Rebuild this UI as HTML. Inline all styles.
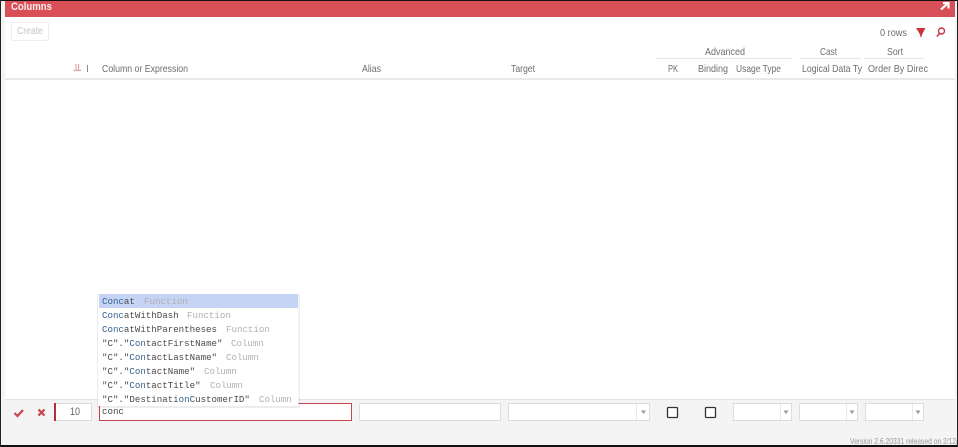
<!DOCTYPE html>
<html>
<head>
<meta charset="utf-8">
<style>
html,body{margin:0;padding:0;background:#f3f3f3;overflow:hidden;width:958px;height:447px}
svg{display:block}
text{font-family:"Liberation Sans",sans-serif}
.h{font-size:10.500px;fill:#6e6e6e}
.m text{font-family:"Liberation Mono",monospace;font-size:9.150px}
.b{fill:#37618f}
.d{fill:#4a4a4a}
.g{fill:#b0b0b0}
</style>
</head>
<body>
<svg width="958" height="447" viewBox="0 0 958 447" xmlns="http://www.w3.org/2000/svg">
<rect width="958" height="447" fill="#f4f4f4"/>
<rect x="5" y="17" width="950" height="383" fill="#fff"/>
<rect x="5" y="1" width="950" height="16" fill="#d84f57"/>
<text x="11" y="10" font-size="11" font-weight="bold" fill="#fbeeee" textLength="41" lengthAdjust="spacingAndGlyphs">Columns</text>
<path d="M941 9.500 L947 4 M943 3 H948.500 V8.500" stroke="#fff" stroke-width="2.200" fill="none"/>

<rect x="11.500" y="22.500" width="37" height="18" rx="1" fill="#fff" stroke="#eee"/>
<text x="17" y="34" font-size="10.500" fill="#c4c4c4" textLength="26" lengthAdjust="spacingAndGlyphs">Create</text>

<text x="880" y="36" class="h" textLength="27" lengthAdjust="spacingAndGlyphs">0 rows</text>
<path d="M916 28 H925.500 L922.500 33.500 L921 38 L919.500 33.500 Z" fill="#c9343c"/>
<circle cx="941.500" cy="31" r="3" fill="none" stroke="#c9343c" stroke-width="1.400"/>
<path d="M939.500 33.500 L936.800 36.500" stroke="#c9343c" stroke-width="1.500"/>

<text x="705" y="55" class="h" textLength="40" lengthAdjust="spacingAndGlyphs">Advanced</text>
<text x="820" y="55" class="h" textLength="17" lengthAdjust="spacingAndGlyphs">Cast</text>
<text x="887" y="55" class="h" textLength="16" lengthAdjust="spacingAndGlyphs">Sort</text>
<path d="M656 58.500 H792 M800 58.500 H861 M864 58.500 H924" stroke="#e6e6e6"/>

<path d="M73.500 70.500 H81 M76 64 V70 M78.500 64 V70" stroke="#e6a3a6" stroke-width="1.200"/>
<rect x="87" y="65" width="1" height="7" fill="#888"/>
<text x="102" y="72" class="h" textLength="86" lengthAdjust="spacingAndGlyphs">Column or Expression</text>
<text x="362" y="72" class="h" textLength="19" lengthAdjust="spacingAndGlyphs">Alias</text>
<text x="511" y="72" class="h" textLength="24" lengthAdjust="spacingAndGlyphs">Target</text>
<text x="668" y="72" class="h" textLength="10" lengthAdjust="spacingAndGlyphs">PK</text>
<text x="698" y="72" class="h" textLength="30" lengthAdjust="spacingAndGlyphs">Binding</text>
<text x="736" y="72" class="h" textLength="45" lengthAdjust="spacingAndGlyphs">Usage Type</text>
<text x="802" y="72" class="h" textLength="60" lengthAdjust="spacingAndGlyphs">Logical Data Ty</text>
<text x="868" y="72" class="h" textLength="60" lengthAdjust="spacingAndGlyphs">Order By Direc</text>
<rect x="5" y="78" width="950" height="2" fill="#e9e9e9"/>

<!-- Edit row -->
<rect x="5" y="399" width="950" height="1" fill="#e3e3e3"/>
<path d="M14.500 413 L17.500 416 L23 410" stroke="#c9444c" stroke-width="2.200" fill="none"/>
<path d="M38.500 409.500 L44.500 415.500 M44.500 409.500 L38.500 415.500" stroke="#c9444c" stroke-width="2.200" fill="none"/>
<rect x="54.500" y="403.500" width="37" height="17" fill="#fff" stroke="#ddd"/>
<rect x="54" y="403" width="2" height="18" fill="#b2323a"/>
<text x="70" y="415" font-size="11" fill="#666" textLength="10" lengthAdjust="spacingAndGlyphs">10</text>
<rect x="99.500" y="403.500" width="252" height="17" fill="#fff" stroke="#c4454d"/>
<g class="m"><text x="102" y="414" fill="#444">conc</text></g>

<rect x="359.500" y="403.500" width="141" height="17" fill="#fff" stroke="#ddd"/>
<g fill="#fff" stroke="#ddd">
<rect x="508.500" y="403.500" width="141" height="17"/>
<rect x="733.500" y="403.500" width="58" height="17"/>
<rect x="799.500" y="403.500" width="58" height="17"/>
<rect x="865.500" y="403.500" width="58" height="17"/>
</g>
<path d="M636.500 404 V420 M780.500 404 V420 M846.500 404 V420 M912.500 404 V420" stroke="#e8e8e8"/>
<path d="M641 410.500 h5 l-2.500 3.500 z M783.500 410.500 h5 l-2.500 3.500 z M849.500 410.500 h5 l-2.500 3.500 z M915.500 410.500 h5 l-2.500 3.500 z" fill="#999"/>
<rect x="667.500" y="407.500" width="10" height="10" rx="1" fill="#fff" stroke="#333" stroke-width="1.300"/>
<rect x="705.500" y="407.500" width="10" height="10" rx="1" fill="#fff" stroke="#333" stroke-width="1.300"/>

<text x="850" y="444" font-size="8.500" fill="#999" textLength="108" lengthAdjust="spacingAndGlyphs">Version 2.6.20331 released on 2/12/</text>

<!-- Autocomplete -->
<rect x="97" y="294" width="203" height="114" fill="#000" opacity=".07"/>
<rect x="98" y="294" width="200.500" height="112" fill="#fff"/>
<rect x="99" y="294" width="199" height="14" fill="#c5d4f5"/>
<g class="m">
<text x="102" y="304"><tspan class="b">Conc</tspan><tspan class="d">at</tspan></text>
<text x="144" y="304" class="g">Function</text>
<text x="102" y="318"><tspan class="b">Conc</tspan><tspan class="d">atWithDash</tspan></text>
<text x="187" y="318" class="g">Function</text>
<text x="102" y="332"><tspan class="b">Conc</tspan><tspan class="d">atWithParentheses</tspan></text>
<text x="226" y="332" class="g">Function</text>
<text x="102" y="346"><tspan class="d">"C"."</tspan><tspan class="b">Con</tspan><tspan class="d">tactFirstName"</tspan></text>
<text x="231" y="346" class="g">Column</text>
<text x="102" y="360"><tspan class="d">"C"."</tspan><tspan class="b">Con</tspan><tspan class="d">tactLastName"</tspan></text>
<text x="226" y="360" class="g">Column</text>
<text x="102" y="374"><tspan class="d">"C"."</tspan><tspan class="b">Con</tspan><tspan class="d">tactName"</tspan></text>
<text x="204" y="374" class="g">Column</text>
<text x="102" y="388"><tspan class="d">"C"."</tspan><tspan class="b">Con</tspan><tspan class="d">tactTitle"</tspan></text>
<text x="210" y="388" class="g">Column</text>
<text x="102" y="402"><tspan class="d">"C"."Destinati</tspan><tspan class="b">onC</tspan><tspan class="d">ustomerID"</tspan></text>
<text x="259" y="402" class="g">Column</text>
</g>

<!-- Outer black frame -->
<rect x="0" y="0" width="958" height="1" fill="#111"/>
<rect x="0" y="445" width="958" height="2" fill="#111"/>
<rect x="0" y="0" width="1" height="447" fill="#222"/>
<rect x="957" y="0" width="1" height="447" fill="#222"/>
</svg>
</body>
</html>
